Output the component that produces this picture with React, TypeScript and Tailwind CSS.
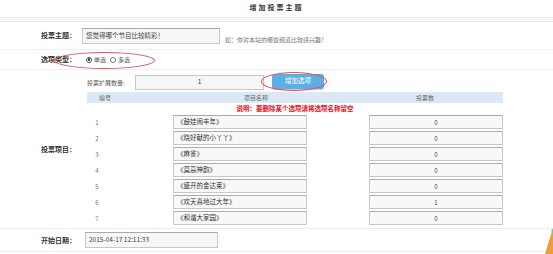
import React from 'react'

const items = [
  { name: '《鼓娃闹丰年》', votes: 0 },
  { name: '《晓好献的小丫丫》', votes: 0 },
  { name: '《麻雀》', votes: 0 },
  { name: '《莫高神韵》', votes: 0 },
  { name: '《盛开的金达莱》', votes: 0 },
  { name: '《欢天喜地过大年》', votes: 1 },
  { name: '《和谐大家园》', votes: 0 },
]

const font = { fontFamily: '"Noto Sans CJK SC", "Liberation Sans", sans-serif' }

function Label({ children }: { children: React.ReactNode }) {
  return (
    <div className="w-[80px] shrink-0 pr-[4px] text-right text-[7px] font-bold text-[#333]">{children}</div>
  )
}

export default function App() {
  return (
    <div className="relative h-[254px] w-[553px] overflow-hidden bg-white text-[#555]" style={font}>
      {/* 标题 */}
      <div className="flex h-[17px] items-center justify-center pb-[3px] text-[7px] font-bold tracking-[2px] text-[#333]">
        增加投票主题
      </div>
      <div className="h-[5px] border-y border-[#e8e8e8] bg-[#f7f7f7]" />

      {/* 投票主题 */}
      <div className="flex h-[28px] items-center border-b border-[#eeeeee]">
        <Label>投票主题：</Label>
        <div className="ml-[2px] flex h-[16px] w-[138px] items-center border border-[#c8c8c8] border-t-[#aaa] bg-[#f6f6f6] px-[3px] text-[6.5px] text-[#444]">
          您觉得哪个节目比较精彩！
        </div>
        <div className="ml-[5px] mt-[8px] text-[6px] text-[#777]">如：你对本站的哪些频道比较感兴趣?</div>
      </div>

      {/* 选项类型 */}
      <div className="relative flex h-[20px] items-center border-b border-[#eeeeee]">
        <Label>选项类型：</Label>
        <div className="ml-[6px] flex items-center gap-[2px] text-[6px] text-[#555]">
          <span className="flex h-[6px] w-[6px] items-center justify-center rounded-full border border-[#555]">
            <span className="h-[2.5px] w-[2.5px] rounded-full bg-[#333]" />
          </span>
          <span>单选</span>
          <span className="ml-[2px] h-[6px] w-[6px] rounded-full border border-[#777]" />
          <span>多选</span>
        </div>
        <div className="pointer-events-none absolute left-[54px] top-[2px] h-[17px] w-[101px] rounded-[50%] border border-[#e0505a]" />
      </div>

      {/* 投票项目 */}
      <div className="flex h-[159px] border-b border-[#eeeeee]">
        <div className="flex w-[85px] shrink-0 items-center">
          <Label>投票项目：</Label>
        </div>
        <div className="w-[418px] pl-[2px]">
          <div className="flex h-[22px] items-center pt-[2px]">
            <span className="w-[48px] text-[6px] text-[#555]">投票扩展数量:</span>
            <div className="flex h-[15px] w-[129px] items-center justify-center border border-[#c8c8c8] bg-[#f6f6f6] text-[6.5px] text-[#444]">
              1
            </div>
            <div className="relative ml-[8px]">
              <div className="flex h-[15px] w-[52px] -translate-y-[1px] items-center justify-center rounded-[3px] bg-[#5daee2] text-[6.5px] text-white shadow-[0_1px_1px_rgba(0,0,0,0.2)]">
                增加选项
              </div>
              <div className="pointer-events-none absolute -left-[11px] -top-[3px] h-[19px] w-[66px] rounded-[50%] border border-[#e0505a]" />
            </div>
          </div>
          <div className="flex h-[11px] w-[416px] items-center bg-[#dce9f4] text-[6px] text-[#666]">
            <span className="w-[36px] text-center">编号</span>
            <span className="w-[266px] text-center">项目名称</span>
            <span className="w-[72px] text-center">投票数</span>
          </div>
          <div className="flex h-[12px] w-[416px] items-center justify-center text-[6.5px] font-bold text-[#e8101b]">
            说明：要删除某个选项请将选项名称留空
          </div>
          <div className="flex w-[416px] flex-col gap-[2px]">
            {items.map((it, i) => (
              <div key={i} className="flex h-[14px] items-center">
                <span className="w-[20px] text-center text-[6px] text-[#777]">{i + 1}</span>
                <div className="ml-[66px] flex h-[14px] w-[134px] items-center border border-[#c8c8c8] border-t-[#aaa] bg-[#f8f8f8] px-[3px] text-[6.5px] text-[#333]">
                  {it.name}
                </div>
                <div className="ml-[62px] flex h-[14px] w-[134px] items-center justify-center border border-[#c8c8c8] border-t-[#aaa] bg-[#f8f8f8] text-[6px] text-[#444]">
                  {it.votes}
                </div>
              </div>
            ))}
          </div>
        </div>
      </div>

      {/* 开始日期 */}
      <div className="flex h-[23px] items-center border-b border-[#eeeeee]">
        <Label>开始日期：</Label>
        <div className="ml-[5px] flex h-[16px] w-[133px] items-center border border-[#c8c8c8] border-t-[#aaa] bg-[#f6f6f6] px-[3px] text-[6.5px] text-[#444]">
          2015-04-17 12:11:33
        </div>
      </div>

      {/* 右下角图标 */}
      <svg className="absolute right-0 top-[228px]" width="8" height="26" viewBox="0 0 8 26">
        <path d="M8 0 L8 26 L0 26 Z" fill="#e8a03c" />
        <path d="M6 2 L8 1 L8 6 Z" fill="#7ab8d8" />
      </svg>
    </div>
  )
}
